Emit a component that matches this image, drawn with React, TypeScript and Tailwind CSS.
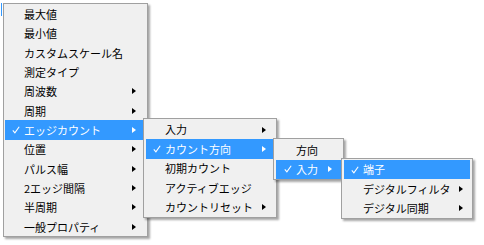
type Item = {
  label: string;
  checked?: boolean;
  sub?: boolean;
  active?: boolean;
};

type MenuProps = {
  items: Item[];
  className: string;
  rowH: string;
  rowClass: string;
  arrowMr: string;
};

function Check({ white }: { white?: boolean }) {
  return (
    <svg width="8" height="8" viewBox="0 0 8 8" className="block">
      <path d="M0.8 4.4 L2.9 6.8 L7.2 0.8" fill="none" stroke={white ? "#ffffff" : "#000000"} strokeWidth="1.1" />
    </svg>
  );
}

function Arrow({ white, mr }: { white?: boolean; mr: string }) {
  return (
    <span
      className={`block w-0 h-0 border-y-[3.5px] border-y-transparent border-l-[4px] ${mr} ${
        white ? "border-l-white" : "border-l-black"
      }`}
    />
  );
}

function Menu({ items, className, rowH, rowClass, arrowMr }: MenuProps) {
  return (
    <div
      className={`absolute bg-[#f0f0f0] border border-[#a0a0a0] shadow-[2px_2px_2px_rgba(0,0,0,0.35)] ${className}`}
    >
      {items.map((it) => (
        <div
          key={it.label}
          className={`flex items-center ${rowH} ${rowClass} ${it.active ? "bg-[#3399ff] text-white" : "text-black"}`}
        >
          <span className="w-[19px] shrink-0 flex pl-[7px]">{it.checked && <Check white={it.active} />}</span>
          <span className="flex-1 whitespace-nowrap">{it.label}</span>
          {it.sub && <Arrow white={it.active} mr={arrowMr} />}
        </div>
      ))}
    </div>
  );
}

const mainItems: Item[] = [
  { label: "最大値" },
  { label: "最小値" },
  { label: "カスタムスケール名" },
  { label: "測定タイプ" },
  { label: "周波数", sub: true },
  { label: "周期", sub: true },
  { label: "エッジカウント", sub: true, checked: true, active: true },
  { label: "位置", sub: true },
  { label: "パルス幅", sub: true },
  { label: "2エッジ間隔", sub: true },
  { label: "半周期", sub: true },
  { label: "一般プロパティ", sub: true },
];

const edgeItems: Item[] = [
  { label: "入力", sub: true },
  { label: "カウント方向", sub: true, checked: true, active: true },
  { label: "初期カウント" },
  { label: "アクティブエッジ" },
  { label: "カウントリセット", sub: true },
];

const dirItems: Item[] = [
  { label: "方向" },
  { label: "入力", sub: true, checked: true, active: true },
];

const inputItems: Item[] = [
  { label: "端子", checked: true, active: true },
  { label: "デジタルフィルタ", sub: true },
  { label: "デジタル同期", sub: true },
];

export default function App() {
  return (
    <div className="relative w-[484px] h-[245px] bg-white overflow-hidden text-[11px] font-['Meiryo_UI','Noto_Sans_CJK_JP',sans-serif]">
      <div className="absolute left-[1px] top-[3px] w-[1px] h-[13px] bg-[#3399ff]" />
      <Menu
        items={mainItems}
        className="left-[3px] top-[3px] w-[145px] pt-[0.5px]"
        rowH="h-[19.33px]"
        rowClass="ml-[1px] mr-[3px]"
        arrowMr="mr-[8px]"
      />
      <Menu
        items={edgeItems}
        className="left-[143px] top-[118px] w-[134px] pt-[1px]"
        rowH="h-[19.4px]"
        rowClass="ml-[2px] mr-[3px]"
        arrowMr="mr-[7px]"
      />
      <Menu
        items={dirItems}
        className="left-[273px] top-[138px] w-[71px] pt-[1px]"
        rowH="h-[19.5px]"
        rowClass="ml-[2px] mr-[2px] pl-[1px]"
        arrowMr="mr-[9px]"
      />
      <Menu
        items={inputItems}
        className="left-[341px] top-[158px] w-[132px] pt-[1px]"
        rowH="h-[19.4px]"
        rowClass="ml-[2px] mr-[2px]"
        arrowMr="mr-[7px]"
      />
    </div>
  );
}
